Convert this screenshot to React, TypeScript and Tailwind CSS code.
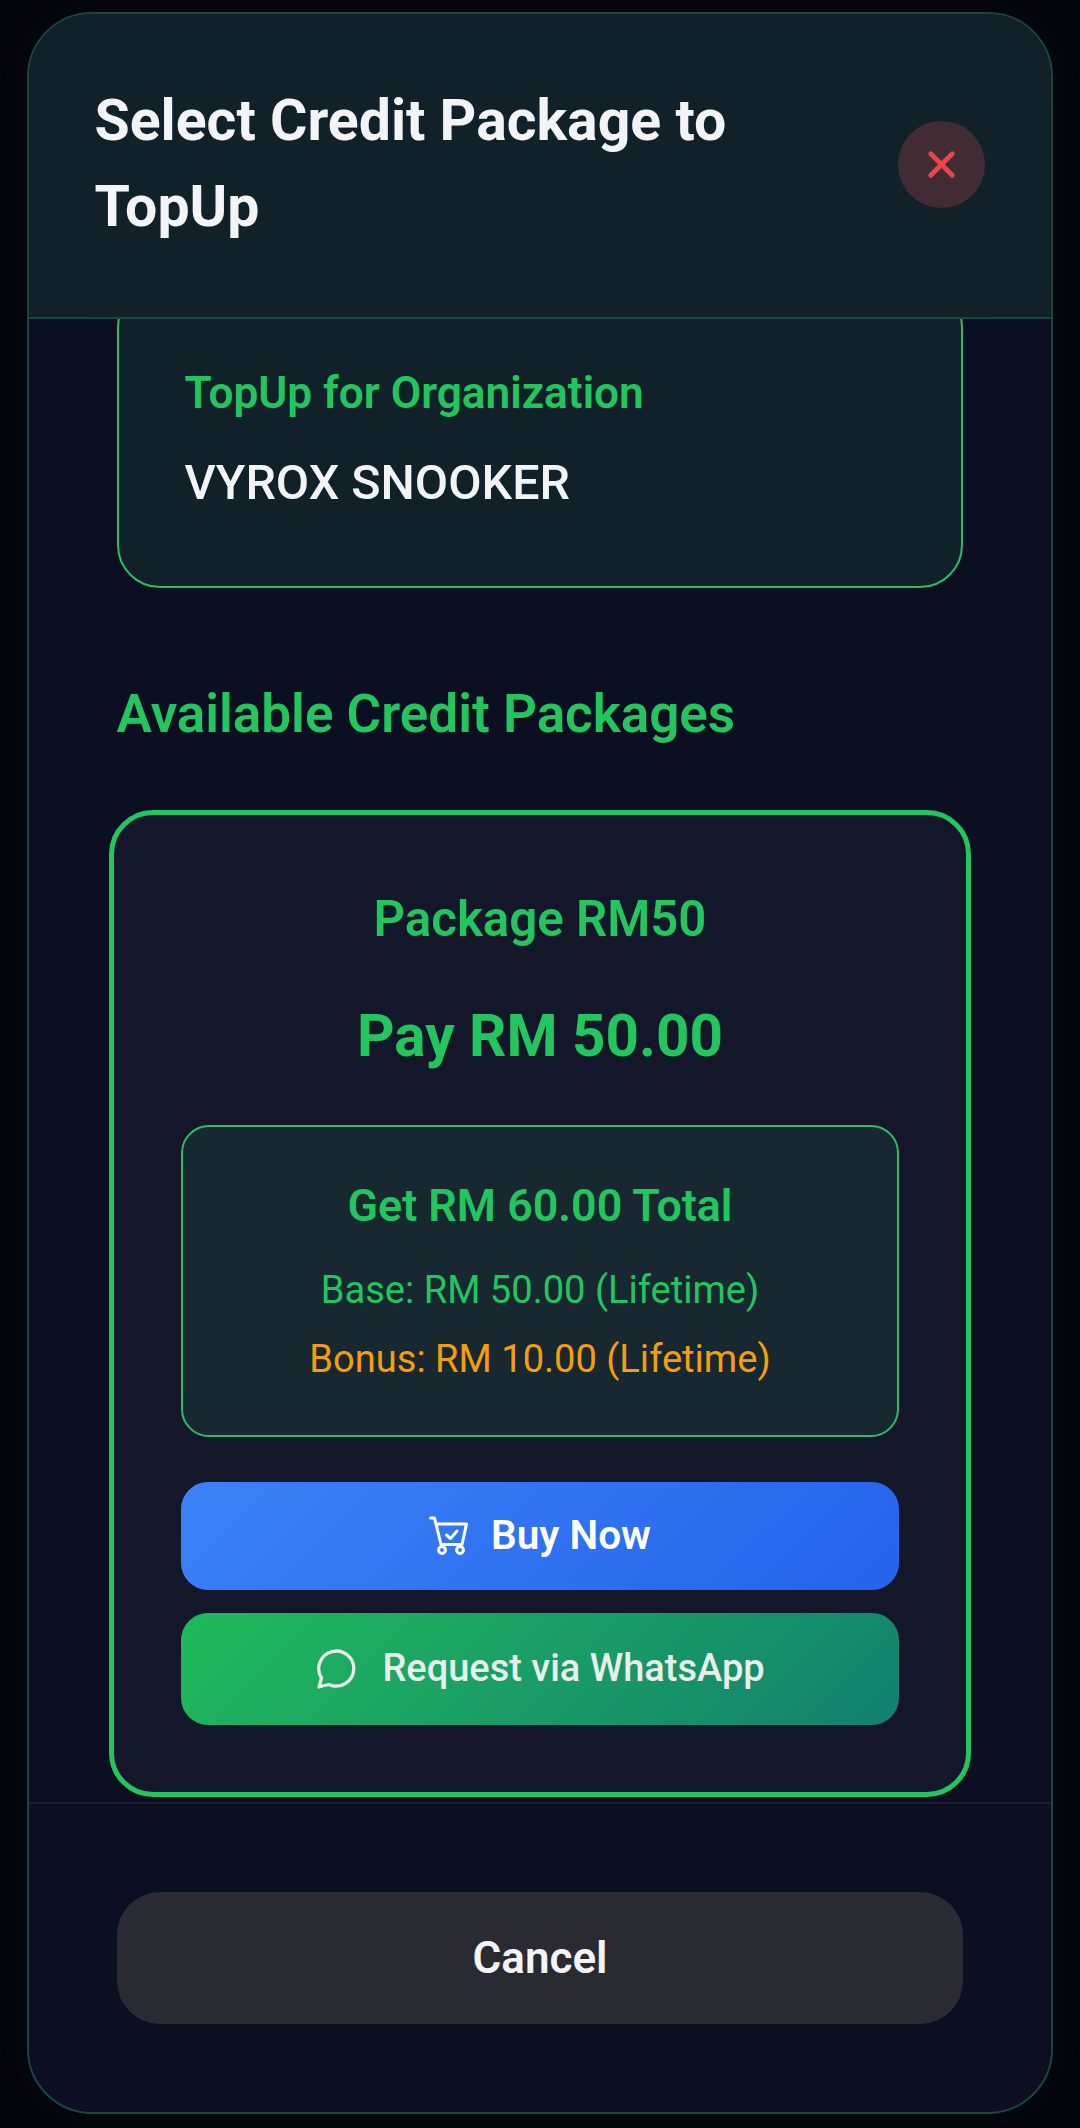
import { X } from "lucide-react";

function CartCheck() {
  return (
    <svg width="40" height="40" viewBox="18 16 40 40" fill="none" stroke="currentColor" strokeWidth="3" strokeLinecap="round" strokeLinejoin="round">
      <path d="M19.5 18H23.5L30 44.5H51L55.5 24H25" />
      <circle cx="31" cy="50" r="3.4" />
      <circle cx="49" cy="50" r="3.4" />
      <path d="M35.5 35L39.5 38.5L46 31" />
    </svg>
  );
}

function Bubble() {
  return (
    <svg width="42" height="42" viewBox="16 8 42 42" fill="none" stroke="currentColor" strokeWidth="3.3" strokeLinejoin="round">
      <path d="M20 47L22.5 38A17.5 17.5 0 1 1 30 44.5Q25 45.5 20 47Z" />
    </svg>
  );
}

export default function App() {
  return (
    <div className="h-[2128px] w-[1080px] overflow-hidden bg-[#04050b] px-[27px] pt-[12px] pb-[14px] font-['Roboto',sans-serif]">
      <div className="flex h-full flex-col overflow-hidden rounded-[65px] border-[2.7px] border-[#1c4540] bg-[#0c0e21] shadow-[0_0_40px_rgba(34,197,94,0.04)]">
        <header className="flex h-[304.5px] shrink-0 items-center justify-between border-b-[2.7px] border-[#1c4540] bg-[#11212a] pr-[66px] pb-[2px] pl-[65.5px]">
          <h2 className="w-[720px] text-[57.2px] leading-[86.4px] font-bold text-[#f3f4f6]">
            Select Credit Package to TopUp
          </h2>
          <button className="flex h-[87px] w-[87px] items-center justify-center rounded-full bg-[#422c33] text-[#e5484a]">
            <X size={43} strokeWidth={2.7} />
          </button>
        </header>

        <div className="min-h-0 flex-1 overflow-hidden px-[87.6px]">
          <section className="-mt-[34px] h-[303px] rounded-[43px] border-[2.7px] border-[#2fbb63] bg-[#11212a] pt-[74px] pr-[65px] pl-[66px] shadow-[0_0_50px_rgba(34,197,94,0.03)]">
            <p className="text-[44.2px] leading-[65px] font-semibold text-[#22c55e]">TopUp for Organization</p>
            <p className="mt-[24px] text-[48.4px] leading-[65px] font-medium text-[#f3f4f6]">VYROX SNOOKER</p>
          </section>

          <h3 className="mt-[90px] text-[53px] leading-[73px] font-semibold text-[#22c55e]">Available Credit Packages</h3>

          <section className="-mx-[7.6px] mt-[59px] h-[987px] rounded-[44px] border-[5.5px] border-[#22c55e] bg-[#141729] px-[67px] pt-[73px]">
            <p className="text-center text-[49.2px] leading-[62px] font-semibold text-[#22c55e]">Package RM50</p>
            <p className="mt-[47px] text-center text-[58.4px] leading-[78px] font-bold text-[#22c55e]">Pay RM 50.00</p>
            <div className="mt-[50px] h-[312px] rounded-[28px] border-[2.7px] border-[#2fbb63] bg-[#172830] pt-[52px] text-center">
              <p className="text-[44.8px] leading-[54px] font-semibold text-[#22c55e]">Get RM 60.00 Total</p>
              <p className="mt-[30px] text-[38.1px] leading-[54px] text-[#22c55e]">Base: RM 50.00 (Lifetime)</p>
              <p className="mt-[15px] text-[38.1px] leading-[54px] text-[#f59e0b]">Bonus: RM 10.00 (Lifetime)</p>
            </div>
            <button className="mt-[45px] flex h-[108px] w-full items-center justify-center gap-[22px] rounded-[27px] bg-[linear-gradient(135deg,#3b82f6,#2563eb)] text-[40.5px] font-semibold text-white">
              <CartCheck />
              Buy Now
            </button>
            <button className="mt-[23px] flex h-[112px] w-full items-center justify-center gap-[25px] rounded-[27px] bg-[linear-gradient(135deg,#21ba5b,#12806f)] text-[38px] font-medium text-[#e9efeb]">
              <Bubble />
              Request via WhatsApp
            </button>
          </section>
        </div>

        <footer className="shrink-0 border-t-[2.7px] border-[#1b1e30] px-[87.6px] pt-[88px] pb-[88px]">
          <button className="h-[132px] w-full rounded-[43px] bg-[#2a2a33] text-[44px] font-semibold text-[#f3f4f6]">Cancel</button>
        </footer>
      </div>
    </div>
  );
}
